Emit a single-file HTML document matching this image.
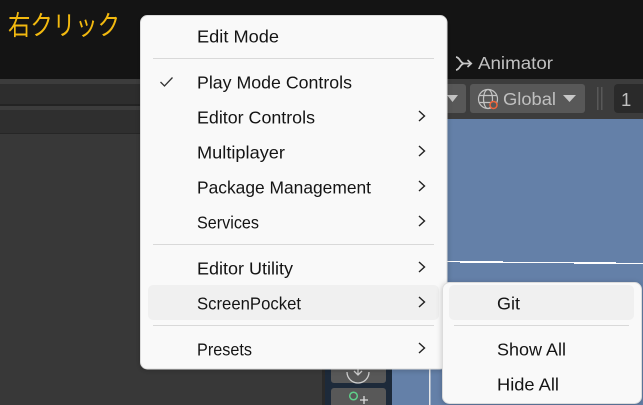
<!DOCTYPE html>
<html>
<head>
<meta charset="utf-8">
<style>
html,body{margin:0;padding:0;background:#383838;}
body{width:643px;height:405px;overflow:hidden;}
svg{display:block;}
.m{font-family:"Liberation Sans","Noto Sans CJK JP",sans-serif;font-size:17.5px;fill:#141414;}
.d{font-family:"Liberation Sans",sans-serif;fill:#c0c0c0;}
</style>
</head>
<body>
<svg width="643" height="405" viewBox="0 0 643 405" xmlns="http://www.w3.org/2000/svg">
<defs>
<filter id="sh" x="-10%" y="-10%" width="120%" height="120%"><feDropShadow dx="0" dy="1" stdDeviation="3" flood-color="#000" flood-opacity="0.22"/></filter>
</defs>
<!-- background -->
<rect width="643" height="405" fill="#383838"/>
<rect width="643" height="79" fill="#141414"/>
<rect y="79" width="643" height="5" fill="#3c3c3c"/>
<rect y="84" width="450" height="20" fill="#2d2d2d"/>
<rect y="104" width="450" height="2" fill="#232323"/>
<rect y="106" width="450" height="4" fill="#3c3c3c"/>
<rect y="110" width="450" height="23" fill="#2f2f2f"/>
<rect y="133" width="450" height="1" fill="#262626"/>
<rect x="445" y="84" width="198" height="35" fill="#3c3c3c"/>
<!-- scene -->
<rect x="392" y="119" width="251" height="286" fill="#6480a8"/>
<g fill="#fff">
<rect x="447" y="261" width="13" height="1"/>
<rect x="460" y="261" width="43" height="2"/>
<rect x="503" y="262" width="71" height="1"/>
<rect x="574" y="262" width="42" height="2"/>
<rect x="616" y="263" width="27" height="1"/>
</g>
<rect x="429" y="365" width="1.5" height="40" fill="#e8e8e8"/>
<!-- scene toolbar -->
<rect x="322" y="365" width="3" height="40" fill="#2a2a2a"/>
<rect x="325" y="365" width="67" height="40" fill="#1d2a3a"/>
<rect x="331" y="360" width="55" height="23" rx="3" fill="#585858"/>
<rect x="331" y="388" width="55" height="20" rx="3" fill="#585858"/>
<path d="M347 372a11 11 0 0 0 22 0" fill="none" stroke="#cfcfcf" stroke-width="1.300"/>
<path d="M358 366v9M354 371l4 4 4-4" fill="none" stroke="#cfcfcf" stroke-width="1.3"/>
<circle cx="353.500" cy="396" r="3.800" fill="none" stroke="#5fd08a" stroke-width="1.500"/>
<path d="M364 396v8M360 400h8" stroke="#ddd" stroke-width="1.3"/>
<!-- title -->
<text x="8" y="35" textLength="112" lengthAdjust="spacingAndGlyphs" style="font-family:'Liberation Sans','Noto Sans CJK JP',sans-serif;font-size:27px;fill:#f2b90f;">右クリック</text>
<!-- animator tab -->
<path d="M456 57c4 .5 4 6 8 6.500h6.500M456 70c4-.5 4-6 8-6.500" fill="none" stroke="#c8c8c8" stroke-width="1.800"/>
<path d="M467.500 60l3.800 3.500-3.800 3.500" fill="none" stroke="#c8c8c8" stroke-width="1.600"/>
<text class="d" x="478" y="69" textLength="75" lengthAdjust="spacingAndGlyphs" font-size="17.500">Animator</text>
<!-- toolbar buttons -->
<rect x="430" y="84" width="36" height="29" rx="3" fill="#585858"/>
<path d="M447 95h11l-5.500 7z" fill="#c4c4c4"/>
<rect x="470" y="84" width="115" height="29" rx="3" fill="#585858"/>
<circle cx="488" cy="99" r="9.500" fill="none" stroke="#c4c4c4" stroke-width="1.200"/>
<ellipse cx="488" cy="99" rx="4.500" ry="9.500" fill="none" stroke="#c4c4c4" stroke-width="1.200"/>
<path d="M479 95.500h18M479 102.500h18" stroke="#c4c4c4" stroke-width="1.200"/>
<circle cx="493.500" cy="105" r="3.500" fill="#585858" stroke="#f0653a" stroke-width="1.500"/>
<text class="d" x="503" y="105" textLength="53" lengthAdjust="spacingAndGlyphs" font-size="17.500">Global</text>
<path d="M563 95h13l-6.500 7z" fill="#c8c8c8"/>
<rect x="597" y="87" width="1.500" height="23" fill="#585858"/>
<rect x="601" y="87" width="1.500" height="23" fill="#585858"/>
<rect x="614" y="84" width="40" height="29" rx="4" fill="#2a2a2a"/>
<text class="d" x="621" y="106" font-size="18.500">1</text>
<!-- main menu -->
<rect x="140.500" y="15.500" width="306.500" height="353.500" rx="7" fill="#f9f9f9" stroke="#dcdcdc" filter="url(#sh)"/>
<rect x="148" y="285" width="291" height="35" rx="5" fill="#f0f0f0"/>
<g fill="#d9d9d9">
<rect x="153" y="58" width="281" height="1"/>
<rect x="153" y="244" width="281" height="1"/>
<rect x="153" y="325" width="281" height="1"/>
</g>
<path d="M160.500 82l4 4 8-8.500" fill="none" stroke="#333" stroke-width="1.300"/>
<text class="m" x="197" y="42.500" textLength="82" lengthAdjust="spacingAndGlyphs">Edit Mode</text>
<text class="m" x="197" y="88.500" textLength="155" lengthAdjust="spacingAndGlyphs">Play Mode Controls</text>
<text class="m" x="197" y="123.500" textLength="118" lengthAdjust="spacingAndGlyphs">Editor Controls</text>
<text class="m" x="197" y="158.500" textLength="88" lengthAdjust="spacingAndGlyphs">Multiplayer</text>
<text class="m" x="197" y="193.500" textLength="174" lengthAdjust="spacingAndGlyphs">Package Management</text>
<text class="m" x="197" y="228.500" textLength="62" lengthAdjust="spacingAndGlyphs">Services</text>
<text class="m" x="197" y="274.500" textLength="96" lengthAdjust="spacingAndGlyphs">Editor Utility</text>
<text class="m" x="197" y="309.500" textLength="104" lengthAdjust="spacingAndGlyphs">ScreenPocket</text>
<text class="m" x="197" y="355.500" textLength="55" lengthAdjust="spacingAndGlyphs">Presets</text>
<g fill="none" stroke="#222" stroke-width="1.400">
<path d="M419 111l5.500 5-5.500 5"/>
<path d="M419 146l5.500 5-5.500 5"/>
<path d="M419 181l5.500 5-5.500 5"/>
<path d="M419 216l5.500 5-5.500 5"/>
<path d="M419 262l5.500 5-5.500 5"/>
<path d="M419 297l5.500 5-5.500 5"/>
<path d="M419 343l5.500 5-5.500 5"/>
</g>
<!-- sub menu -->
<rect x="442.500" y="282.500" width="199" height="121" rx="7" fill="#f9f9f9" stroke="#dcdcdc" filter="url(#sh)"/>
<rect x="449" y="285" width="185" height="35" rx="5" fill="#f0f0f0"/>
<rect x="454" y="325" width="175" height="1" fill="#d9d9d9"/>
<text class="m" x="497" y="309.500" textLength="23" lengthAdjust="spacingAndGlyphs">Git</text>
<text class="m" x="497" y="355.500" textLength="69" lengthAdjust="spacingAndGlyphs">Show All</text>
<text class="m" x="497" y="390.500" textLength="62" lengthAdjust="spacingAndGlyphs">Hide All</text>
</svg>
</body>
</html>
